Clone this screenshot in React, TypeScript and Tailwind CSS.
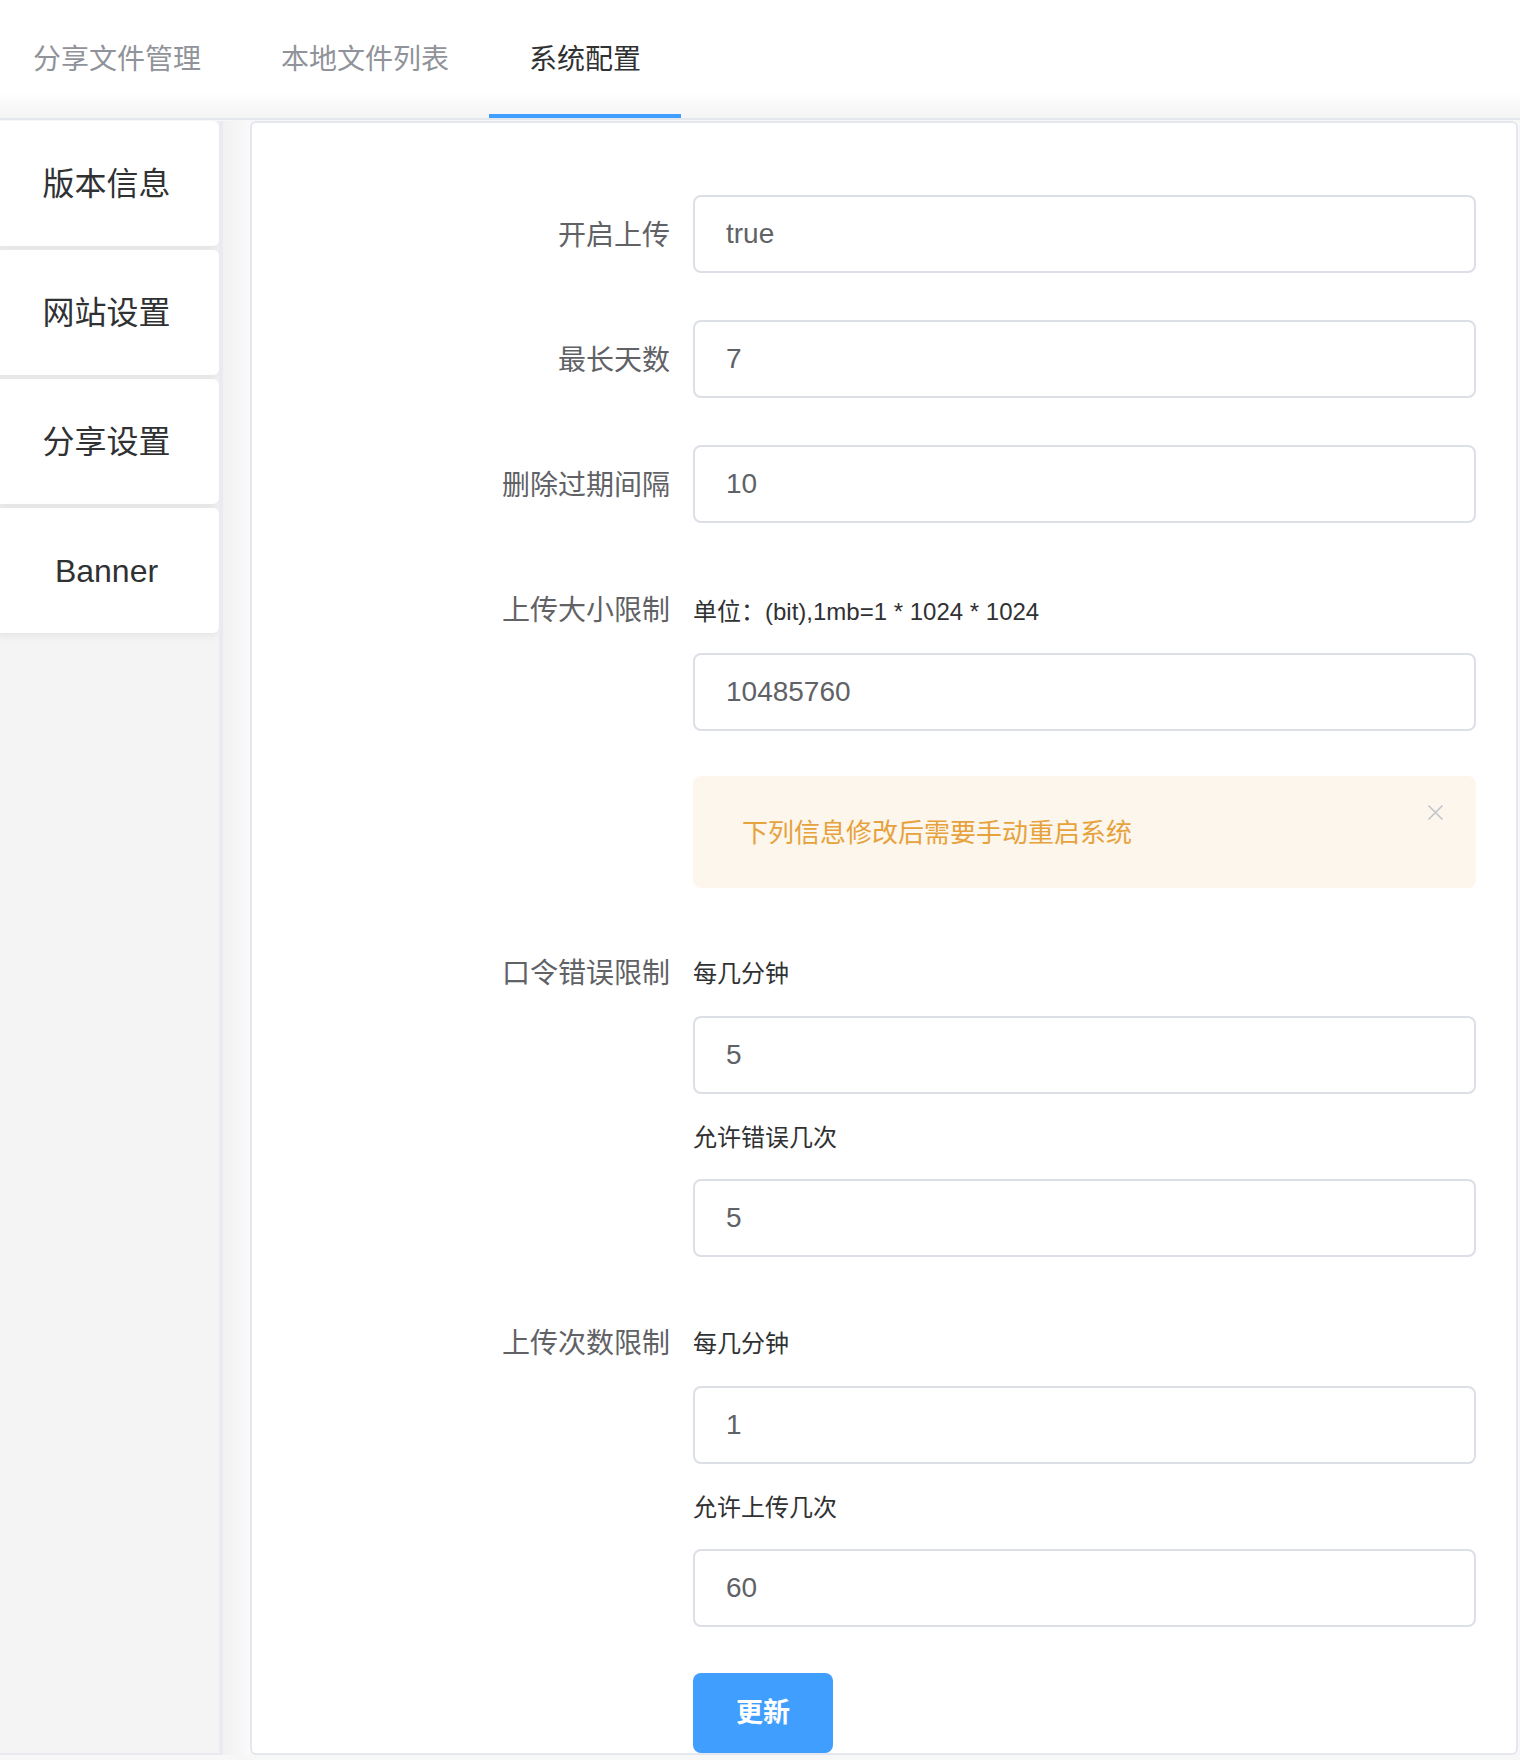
import React from 'react';

const tabs = ['分享文件管理', '本地文件列表', '系统配置'];
const menu = ['版本信息', '网站设置', '分享设置', 'Banner'];

const Field: React.FC<{ value: string }> = ({ value }) => (
  <input
    readOnly
    value={value}
    className="block w-full h-[78px] border-2 border-[#dcdfe6] rounded-[8px] px-[31px] text-[28px] text-[#606266] bg-white outline-none"
  />
);

const Label: React.FC<{ text: string }> = ({ text }) => (
  <div className="w-[441px] shrink-0 pr-[23px] pt-[2px] text-right h-[78px] leading-[78px] text-[28px] text-[#606266]">
    {text}
  </div>
);

export default function App() {
  return (
    <div className="w-full h-[1760px] overflow-hidden bg-[#f7f7f8] font-['Liberation_Sans','Noto_Sans_CJK_SC',sans-serif]">
      {/* Tabs */}
      <div className="h-[120px] flex border-b-2 border-[#e4e7ed] bg-[linear-gradient(to_bottom,#ffffff_78%,#f4f4f4)]">
        {tabs.map((t, i) => (
          <div
            key={t}
            className={
              'relative h-[118px] pt-[2px] flex items-center text-[28px] ' +
              (i === 0 ? 'pl-[33px] pr-[40px] ' : 'px-[40px] ') +
              (i === 2 ? 'text-[#303133]' : 'text-[#909399]')
            }
          >
            {t}
            {i === 2 && <div className="absolute left-0 right-0 bottom-0 h-[4px] bg-[#409eff]" />}
          </div>
        ))}
      </div>

      <div className="flex h-[1635px] pt-[1px]">
        {/* Sidebar */}
        <div className="w-[223px] shrink-0 bg-[#f4f4f5] border-r-4 border-b-2 border-[#e9ebf0] flex flex-col gap-[4px] overflow-hidden">
          {menu.map(m => (
            <div
              key={m}
              className="h-[125px] shrink-0 ml-[-6px] bg-white rounded-[6px] shadow-[0_2px_10px_0_rgba(0,0,0,0.08)] flex items-center justify-center text-[32px] text-[#303133]"
            >
              {m}
            </div>
          ))}
        </div>

        <div className="w-[27px] shrink-0 bg-[linear-gradient(to_right,#f1f1f2,#fafafa)]" />

        {/* Panel */}
        <div className="flex-1 mr-[2px] bg-white border-2 border-[#e4e7ed] rounded-[6px] overflow-hidden">
          <div className="pt-[72px] pr-[40px]">
            {['开启上传:true', '最长天数:7', '删除过期间隔:10'].map(row => {
              const [label, value] = row.split(':');
              return (
                <div key={label} className="flex mb-[47px]">
                  <Label text={label} />
                  <div className="flex-1">
                    <Field value={value} />
                  </div>
                </div>
              );
            })}

            <div className="flex mb-[45px]">
              <Label text="上传大小限制" />
              <div className="flex-1">
                <div className="h-[78px] pt-[5px] flex items-center text-[24px] text-[#303133] mb-[5px]">
                  单位：(bit),1mb=1 * 1024 * 1024
                </div>
                <Field value="10485760" />
              </div>
            </div>

            <div className="flex mb-[45px]">
              <div className="w-[441px] shrink-0" />
              <div className="flex-1 relative h-[112px] bg-[#fdf6ec] rounded-[8px] pl-[49px] pt-[2px] flex items-center text-[26px] text-[#e6a23c]">
                下列信息修改后需要手动重启系统
                <svg
                  className="absolute top-[28px] right-[32px]"
                  width="17"
                  height="17"
                  viewBox="0 0 17 17"
                  fill="none"
                  stroke="#c0c4cc"
                  strokeWidth="1.6"
                >
                  <path d="M1.5 1.5l14 14M15.5 1.5l-14 14" />
                </svg>
              </div>
            </div>

            {[
              { label: '口令错误限制', a: '5', sub: '允许错误几次', b: '5' },
              { label: '上传次数限制', a: '1', sub: '允许上传几次', b: '60' }
            ].map(g => (
              <div key={g.label} className="flex mb-[46px]">
                <Label text={g.label} />
                <div className="flex-1">
                  <div className="h-[78px] pt-[4px] flex items-center text-[24px] text-[#303133] mb-[5px]">每几分钟</div>
                  <Field value={g.a} />
                  <div className="h-[80px] mt-[3px] mb-[2px] pt-[2px] flex items-center text-[24px] text-[#303133]">{g.sub}</div>
                  <Field value={g.b} />
                </div>
              </div>
            ))}

            <div className="flex pb-[40px]">
              <div className="w-[441px] shrink-0" />
              <button className="w-[140px] h-[80px] bg-[#409eff] rounded-[8px] text-white text-[27px] font-bold">
                更新
              </button>
            </div>
          </div>
        </div>
      </div>
    </div>
  );
}
